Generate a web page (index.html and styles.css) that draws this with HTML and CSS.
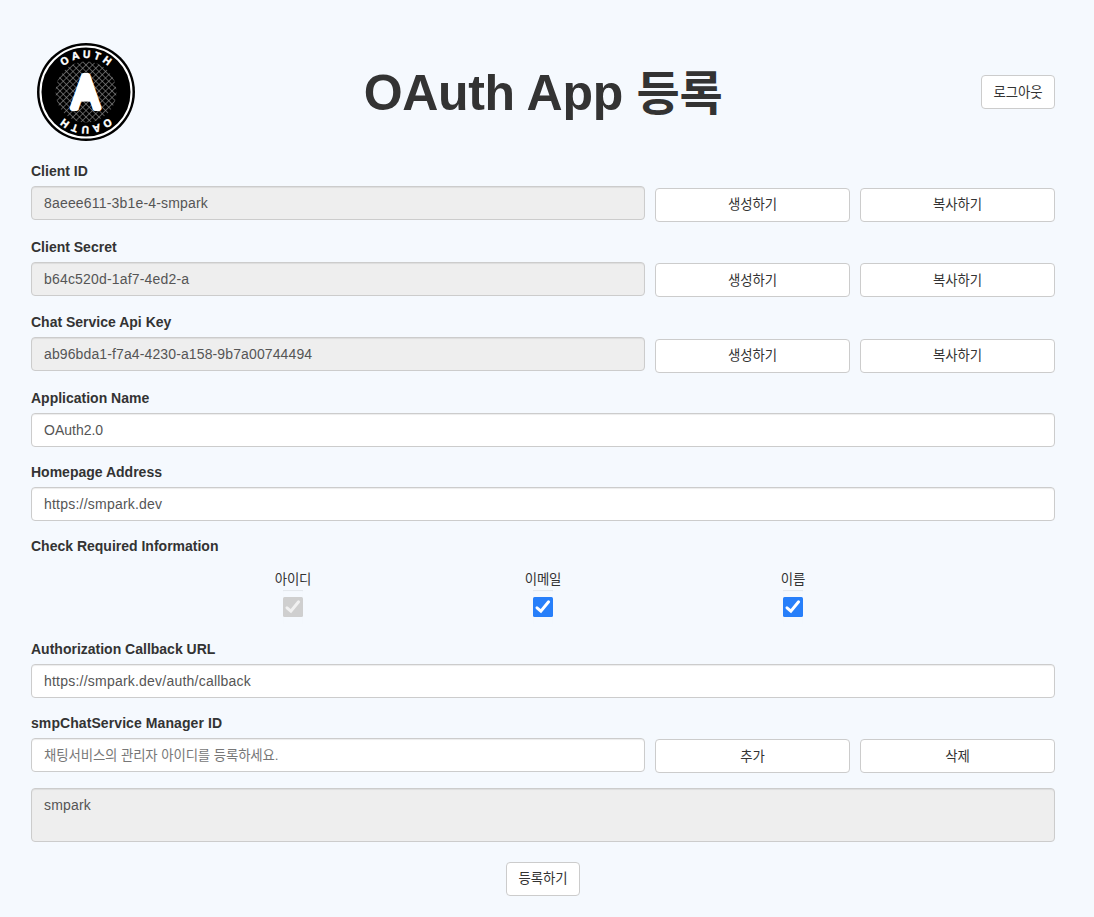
FILE: index.html
```html
<!DOCTYPE html>
<html lang="ko">
<head>
<meta charset="utf-8">
<title>OAuth App 등록</title>
<link rel="stylesheet" href="styles.css">
</head>
<body>
<main class="page">
  <header class="header">
    <svg class="logo" viewBox="0 0 98 98" role="img" aria-label="OAuth">
      <defs>
        <pattern id="mesh" width="4.6" height="4.6" patternUnits="userSpaceOnUse" patternTransform="rotate(45 49 49)">
          <path d="M0 2.3H4.6M2.3 0V4.6" stroke="#8c8c8c" stroke-width=".6" fill="none"/>
        </pattern>
        <path id="arc" d="M15 49a34 34 0 0 1 68 0"/>
      </defs>
      <circle cx="49" cy="49" r="49" fill="#000"/>
      <circle cx="49" cy="49" r="45.5" fill="none" stroke="#fff" stroke-width="2"/>
      <circle cx="49" cy="49" r="30.5" fill="url(#mesh)"/>
      <text class="logo-ring"><textPath href="#arc" startOffset="51%">OAUTH</textPath></text>
      <text class="logo-ring" transform="rotate(180 49 49)"><textPath href="#arc" startOffset="51%">OAUTH</textPath></text>
      <path d="M46 36h5.5l6 20h-17.500z" fill="#fff"/>
      <text class="logo-mark" transform="translate(48.7 65.2) scale(.87 1)">A</text>
    </svg>
    <h1 class="title">OAuth App <span class="title-ko">등록</span></h1>
    <button class="btn btn-small" type="button">로그아웃</button>
  </header>

  <form class="form">
    <div class="group group-actions">
      <label class="label" for="cid">Client ID</label>
      <div class="row">
        <input class="control control-id" id="cid" value="8aeee611-3b1e-4-smpark" readonly>
        <button class="btn" type="button">생성하기</button>
        <button class="btn" type="button">복사하기</button>
      </div>
    </div>
    <div class="group group-actions">
      <label class="label" for="secret">Client Secret</label>
      <div class="row">
        <input class="control control-id" id="secret" value="b64c520d-1af7-4ed2-a" readonly>
        <button class="btn" type="button">생성하기</button>
        <button class="btn" type="button">복사하기</button>
      </div>
    </div>
    <div class="group group-actions">
      <label class="label" for="key">Chat Service Api Key</label>
      <div class="row">
        <input class="control control-key" id="key" value="ab96bda1-f7a4-4230-a158-9b7a00744494" readonly>
        <button class="btn" type="button">생성하기</button>
        <button class="btn" type="button">복사하기</button>
      </div>
    </div>
    <div class="group">
      <label class="label" for="name">Application Name</label>
      <input class="control" id="name" value="OAuth2.0">
    </div>
    <div class="group">
      <label class="label" for="home">Homepage Address</label>
      <input class="control control-url" id="home" value="https://smpark.dev">
    </div>
    <div class="group group-checks">
      <span class="label">Check Required Information</span>
      <div class="checks">
        <div class="check">
          <span class="check-label">아이디</span>
          <span class="check-frame"><svg class="box box-off" viewBox="0 0 20 20"><rect class="box-bg" width="20" height="20" rx="1.5"/><path class="box-tick" d="M4 10.8L7.9 14.2L15.6 4.8"/></svg></span>
        </div>
        <div class="check">
          <span class="check-label">이메일</span>
          <span class="check-frame"><svg class="box" viewBox="0 0 20 20"><rect class="box-bg" width="20" height="20" rx="1.5"/><path class="box-tick" d="M4 10.8L7.9 14.2L15.6 4.8"/></svg></span>
        </div>
        <div class="check">
          <span class="check-label">이름</span>
          <span class="check-frame"><svg class="box" viewBox="0 0 20 20"><rect class="box-bg" width="20" height="20" rx="1.5"/><path class="box-tick" d="M4 10.8L7.9 14.2L15.6 4.8"/></svg></span>
        </div>
      </div>
    </div>
    <div class="group">
      <label class="label" for="cb">Authorization Callback URL</label>
      <input class="control control-url" id="cb" value="https://smpark.dev/auth/callback">
    </div>
    <div class="group group-manager">
      <label class="label label-manager" for="mgr">smpChatService Manager ID</label>
      <div class="row">
        <input class="control" id="mgr" placeholder="채팅서비스의 관리자 아이디를 등록하세요.">
        <button class="btn" type="button">추가</button>
        <button class="btn" type="button">삭제</button>
      </div>
    </div>
    <textarea class="control control-id area" readonly>smpark</textarea>
    <div class="submit"><button class="btn btn-small" type="button">등록하기</button></div>
  </form>
</main>
</body>
</html>
```
FILE: styles.css
```css
* { box-sizing: border-box; }

body {
  margin: 0;
  min-height: 917px;
  background: #f5f9fe;
  color: #333;
  font: 14px/20px "Liberation Sans", "Noto Sans CJK KR", sans-serif;
}

.page { width: 1024px; margin: 0 0 0 31px; padding-top: 43px; }

.header {
  display: grid;
  grid-template-columns: 110px 1fr 110px;
  align-items: center;
  height: 98px;
  margin-bottom: 20px;
}
.header .btn { justify-self: end; }

.logo { width: 98px; height: 98px; margin-left: 6px; display: block; }
.logo-ring {
  font: bold 10.5px "Open Sans", sans-serif;
  letter-spacing: 2.8px;
  fill: #fff;
  stroke: #fff;
  stroke-width: .3;
  text-anchor: middle;
}
.logo-mark {
  font: 46px "Liberation Sans", sans-serif;
  fill: #fff;
  stroke: #fff;
  stroke-width: 6;
  stroke-linejoin: round;
  text-anchor: middle;
}

.title {
  margin: 0;
  padding-top: 2px;
  font-size: 50px;
  line-height: 60px;
  font-weight: bold;
  letter-spacing: -.3px;
  text-align: center;
  white-space: nowrap;
}
.title-ko { font-family: "Noto Sans CJK KR", sans-serif; font-size: 47px; line-height: 1; }

.group { margin-bottom: 15px; }
.group-actions { margin-bottom: 16.5px; }
.group-manager { margin-bottom: 16px; }

.label { display: block; margin-bottom: 5px; font-weight: bold; }
.label-manager { letter-spacing: .08px; }

.row {
  display: grid;
  grid-template-columns: 614px 195px 195px;
  gap: 10px;
  height: 34px;
}
.row .btn { margin-top: 1.67px; }

.control {
  display: block;
  width: 100%;
  height: 34px;
  padding: 6px 12px;
  border: 1px solid #ccc;
  border-radius: 4px;
  background: #fff;
  box-shadow: inset 0 1px 1px rgba(0, 0, 0, .075);
  color: #555;
  font: inherit;
  outline: 0;
}
.control:read-only { background: #eee; }
.control::placeholder { color: #777; font-size: 13.4px; letter-spacing: -.1px; opacity: 1; }
.control-id { letter-spacing: .18px; }
.control-key { letter-spacing: .12px; }
.control-url { letter-spacing: .22px; }
.area { height: 54px; resize: none; overflow: hidden; }

.btn {
  height: 34px;
  padding: 0 0 3px;
  border: 1px solid #ccc;
  border-radius: 4px;
  background: #fff;
  color: #333;
  font: 13.4px/20px "Noto Sans CJK KR", sans-serif;
  letter-spacing: -.1px;
}
.btn-small { width: 74px; }

.group-checks { height: 88px; }
.checks {
  display: grid;
  grid-template-columns: repeat(3, 250px);
  justify-content: center;
  padding-top: 9px;
}
.check { display: flex; flex-direction: column; align-items: center; }
.check-label { font-size: 13.4px; letter-spacing: -.1px; line-height: 20px; }
.check-frame {
  display: flex;
  align-items: center;
  width: 20px;
  height: 34px;
  box-shadow: inset 0 1px 1px rgba(0, 0, 0, .075);
}
.box { width: 20px; height: 20px; display: block; }
.box-bg { fill: #277ffa; }
.box-tick { fill: none; stroke: #fff; stroke-width: 3; stroke-linecap: round; }
.box-off .box-bg { fill: #cfcfcf; }
.box-off .box-tick { stroke: #f1f1f1; }

.submit { display: flex; justify-content: center; padding-top: 20px; }
```
